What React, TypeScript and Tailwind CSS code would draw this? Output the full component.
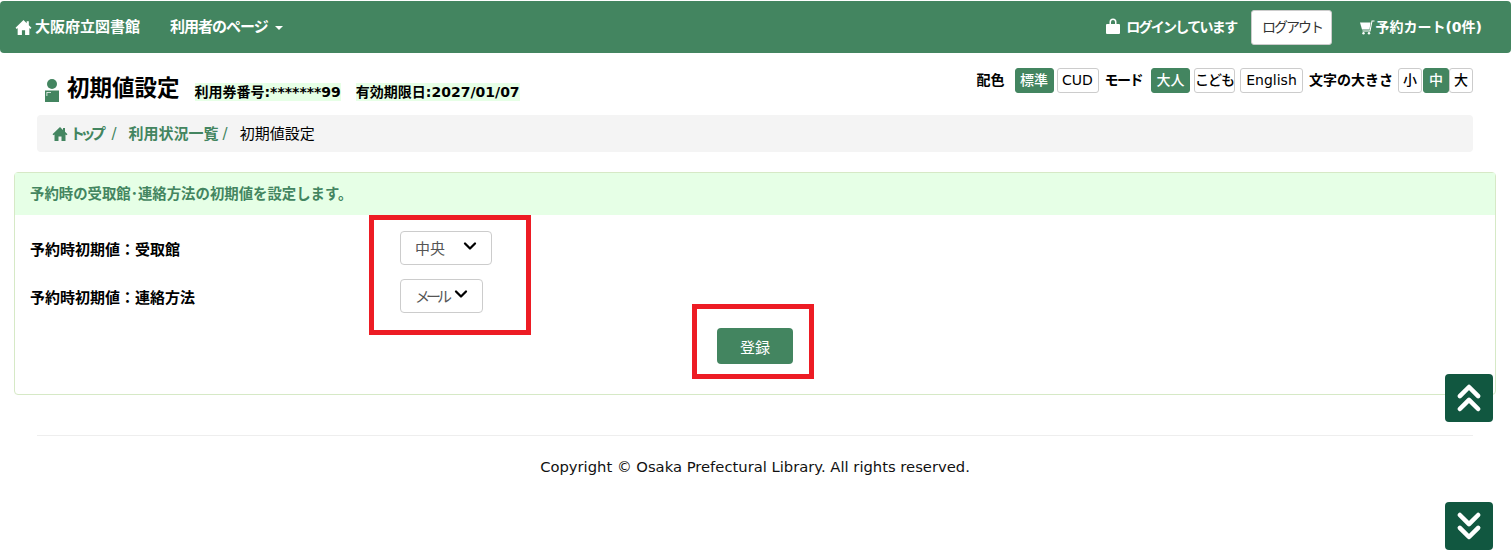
import React from "react";
import { ChevronDown, ChevronsDown, ChevronsUp } from "lucide-react";

const font = "font-['DejaVu_Sans','Noto_Sans_CJK_JP',sans-serif]";

function HomeIcon({ className }: { className: string }) {
  return (
    <svg viewBox="0 0 16 16" className={className} fill="currentColor">
      <path d="M8 1 0.5 8.2 1.6 9.3 2.5 8.5V15H6.5V10.5H9.5V15H13.5V8.5L14.4 9.3 15.5 8.2 13 5.8V2H11V3.9Z" />
    </svg>
  );
}

function LockIcon() {
  return (
    <svg viewBox="0 0 14 16" className="mb-[2px] h-[16px] w-[14px]" fill="currentColor">
      <path fillRule="evenodd" d="M3.500 6V4a3.500 3.500 0 0 1 7 0v2H13a1 1 0 0 1 1 1v8a1 1 0 0 1-1 1H1a1 1 0 0 1-1-1V7a1 1 0 0 1 1-1ZM5 6h4V4a2 2 0 0 0-4 0Z" />
    </svg>
  );
}

function CartIcon() {
  return (
    <svg viewBox="0 0 15 15" className="h-[15px] w-[15px]" fill="currentColor">
      <path d="M0 2.500H10.500L9.500 9.500H2Z" />
      <path d="M2.500 11H10L12 1H14.500" fill="none" stroke="currentColor" strokeWidth="1.100" />
      <circle cx="3.500" cy="13.300" r="1.200" />
      <circle cx="9" cy="13.300" r="1.200" />
    </svg>
  );
}

function UserIcon() {
  return (
    <svg viewBox="0 0 14 23" className="h-[23px] w-[14px]" fill="#438560">
      <circle cx="7" cy="5" r="5" />
      <path d="M0 11.500H14V23H0ZM1.500 13V17H2.300V13.800H6V13Z" fillRule="evenodd" />
    </svg>
  );
}

function OptionButton({ label, active, className = "" }: { label: string; active?: boolean; className?: string }) {
  return (
    <span
      className={`flex h-[25px] items-center justify-center rounded-[3px] border text-[14px] font-medium whitespace-nowrap ${
        active ? "border-[#438560] bg-[#438560] text-white" : "border-[#ccc] bg-white text-black"
      } ${className}`}
    >
      {label}
    </span>
  );
}

function SelectBox({ label, width, tracking }: { label: string; width: string; tracking: string }) {
  return (
    <div className={`flex h-[34px] items-center rounded-[4px] border border-[#ccc] bg-white pl-[14px] text-[15px] font-normal whitespace-nowrap text-[#555] ${width}`}>
      <span className={`flex-1 pt-[3px] ${tracking}`}>{label}</span>
      <ChevronDown className="mr-[11px] mb-[4px] h-[20px] w-[20px] text-black" strokeWidth={2.75} />
    </div>
  );
}

export default function App() {
  return (
    <div className={`relative h-[554px] w-[1511px] overflow-hidden bg-white pt-px text-black ${font}`}>
      <nav className="flex h-[52px] items-center rounded-[4px] bg-[#438560] pr-[29px] pl-[15px] text-[15px] font-bold whitespace-nowrap text-white">
        <HomeIcon className="mr-[3px] h-[17px] w-[17px]" />
        <span>大阪府立図書館</span>
        <span className="ml-[30px] tracking-[-1px]">利用者のページ</span>
        <span className="mt-[2px] ml-[7px] h-0 w-0 border-x-[4px] border-t-[4px] border-x-transparent border-t-white" />
        <div className="ml-auto flex items-center">
          <LockIcon />
          <span className="ml-[6px] text-[14px] tracking-[-1.7px]">ログインしています</span>
          <span className="ml-[15px] flex h-[35px] w-[81px] items-center justify-center rounded-[3px] border border-[#ccc] bg-white text-[14px] font-normal tracking-[-2px] text-[#333]">
            ログアウト
          </span>
          <span className="ml-[28px]"><CartIcon /></span>
          <span className="text-[14px]">予約カート(0件)</span>
        </div>
      </nav>

      <div className="mr-[38px] ml-[37px]">
        <div className="flex h-[62px] items-start">
          <div className="mt-[26px] ml-[8px]"><UserIcon /></div>
          <h1 className="mt-[20px] ml-[8px] text-[22.5px] leading-[30px] font-bold">初期値設定</h1>
          <div className="mt-[30px] ml-[15px] flex text-[14px] leading-[18px] font-bold">
            <span className="bg-[#e6ffe6]">利用券番号:*******99</span>
            <span className="ml-[15px] bg-[#e6ffe6]">有効期限日:2027/01/07</span>
          </div>
          <div className="mt-[15px] ml-auto flex items-center text-[14px] font-bold whitespace-nowrap">
            <span className="mr-[10px]">配色</span>
            <OptionButton label="標準" active className="w-[39px]" />
            <OptionButton label="CUD" className="ml-[3px] w-[42px]" />
            <span className="mx-[6px] tracking-[-1.5px]">モード</span>
            <OptionButton label="大人" active className="ml-[3px] w-[39px]" />
            <OptionButton label="こども" className="ml-[4px] w-[41px] tracking-[-1px]" />
            <OptionButton label="English" className="ml-[5px] w-[63px]" />
            <span className="mr-[5px] ml-[6px]">文字の大きさ</span>
            <OptionButton label="小" className="w-[24px]" />
            <OptionButton label="中" active className="ml-[1px] w-[26px]" />
            <OptionButton label="大" className="w-[24px]" />
          </div>
        </div>
        <div className="flex h-[37px] items-center rounded-[4px] bg-[#f4f4f4] pt-[1px] pl-[15px] text-[15px]">
          <HomeIcon className="h-[16px] w-[16px] text-[#438560]" />
          <span className="ml-[2px] font-bold tracking-[-4.5px] text-[#438560]">トップ</span>
          <span className="ml-[10px] text-[#438560]">/</span>
          <span className="ml-[12px] font-bold text-[#438560]">利用状況一覧</span>
          <span className="ml-[4px] text-[#438560]">/</span>
          <span className="ml-[12px]">初期値設定</span>
        </div>
      </div>

      <section className="mx-[14px] mt-[20px] h-[223px] w-[1482px] rounded-[4px] border border-[#d6e9c6]">
        <div className="flex h-[42px] items-center bg-[#e6ffe6] pt-[2px] pl-[15px] text-[14.4px] font-bold text-[#438560]">
          予約時の受取館･連絡方法の初期値を設定します。
        </div>
        <div className="grid grid-cols-[370px_1fr] items-center gap-y-[14px] pt-[16px] pl-[15px] text-[15px] font-bold">
          <span className="pt-[4px]">予約時初期値：受取館</span>
          <SelectBox label="中央" width="w-[92px]" tracking="tracking-normal" />
          <span className="pt-[5px]">予約時初期値：連絡方法</span>
          <SelectBox label="メール" width="w-[83px]" tracking="tracking-[-4px]" />
        </div>
        <div className="mt-[15px] flex justify-center">
          <span className="flex h-[36px] w-[76px] items-center justify-center rounded-[4px] bg-[#438560] pt-[4px] text-[15px] text-white">
            登録
          </span>
        </div>
      </section>

      <footer className="mt-[40px] mr-[38px] ml-[37px] border-t border-[#eee] pt-[21px] text-center text-[14.75px] leading-[20px] text-[#111]">
        Copyright © Osaka Prefectural Library. All rights reserved.
      </footer>

      {/* annotations */}
      <div className="absolute top-[215px] left-[369px] h-[120px] w-[162px] border-[5px] border-[#ed1c24]" />
      <div className="absolute top-[304px] left-[692px] h-[75px] w-[122px] border-[5px] border-[#ed1c24]" />

      <span className="absolute top-[374px] left-[1445px] flex h-[48px] w-[48px] items-center justify-center rounded-[4px] bg-[#115740] text-white">
        <ChevronsUp className="h-[44px] w-[44px]" strokeWidth={2.5} />
      </span>
      <span className="absolute top-[502px] left-[1445px] flex h-[48px] w-[48px] items-center justify-center rounded-[4px] bg-[#115740] text-white">
        <ChevronsDown className="h-[44px] w-[44px]" strokeWidth={2.5} />
      </span>
    </div>
  );
}
